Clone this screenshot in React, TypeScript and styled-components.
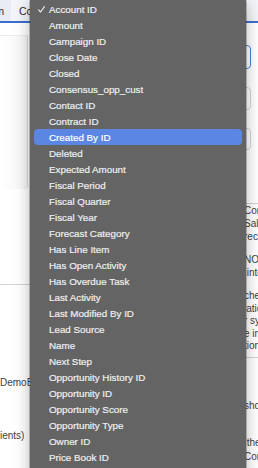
import styled, { createGlobalStyle } from "styled-components";

const GlobalStyle = createGlobalStyle`
  html, body {
    margin: 0;
    padding: 0;
    width: 258px;
    height: 468px;
    overflow: hidden;
    background: #ffffff;
  }
`;

const Page = styled.div`
  position: relative;
  width: 258px;
  height: 468px;
  overflow: hidden;
  background: #ffffff;
  font-family: "Liberation Sans", Arial, sans-serif;
  font-size: 10px;
  color: #3e3e3c;
`;

const TabBar = styled.div`
  display: flex;
  height: 21px;
  background: #f4f5f8;
  border-bottom: 2px solid #3b6fce;
`;

const Tab = styled.div<{ $active?: boolean }>`
  box-sizing: border-box;
  display: flex;
  align-items: center;
  justify-content: ${(p) => (p.$active ? "flex-end" : "flex-start")};
  width: ${(p) => (p.$active ? "11px" : "auto")};
  padding: ${(p) => (p.$active ? "0 7px 0 0" : "0 0 0 8px")};
  overflow: hidden;
  white-space: nowrap;
  background: ${(p) => (p.$active ? "#e9ecf4" : "transparent")};
  font-size: 10.5px;
  color: #2b2b2b;
`;

const Body = styled.div`
  display: grid;
  grid-template-columns: 30px 1fr;
  height: 445px;
`;

const LeftCol = styled.div`
  display: flex;
  flex-direction: column;
  overflow: hidden;
`;

const Card = styled.div`
  margin-top: 12px;
  width: 27px;
  height: 153px;
  border-top: 1px solid #ececec;
  border-right: 1px solid #dadada;
  border-bottom-right-radius: 4px;
  background: linear-gradient(to right, #ffffff, #f5f5f5);
`;

const Rule = styled.div<{ $gap: number }>`
  margin-top: ${(p) => p.$gap}px;
  height: 1px;
  background: #d2d2d2;
  flex-shrink: 0;
`;

const Line = styled.div<{ $gap?: number }>`
  margin-top: ${(p) => p.$gap ?? 0}px;
  line-height: 12px;
  white-space: nowrap;
`;

const RightCol = styled.div`
  display: flex;
  flex-direction: column;
  overflow: hidden;
`;

const Form = styled.div`
  display: flex;
  flex-direction: column;
  padding: 0 7px 0 110px;
`;

const Input = styled.div<{ $gap: number; $h: number; $focus?: boolean }>`
  margin-top: ${(p) => p.$gap}px;
  height: ${(p) => p.$h - 2}px;
  border: 1px solid ${(p) => (p.$focus ? "#4c7fd8" : "#d4d4d4")};
  border-radius: 4px;
  background: #fff;
`;

const TextBlock = styled.div<{ $gap: number; $lh: number }>`
  margin-top: ${(p) => p.$gap}px;
  padding-left: 214px;
  line-height: ${(p) => p.$lh}px;
  white-space: pre;
  font-size: 10px;
  color: #3e3e3c;
`;

const Menu = styled.div`
  position: absolute;
  top: -4px;
  left: 30px;
  width: 216px;
  bottom: -30px;
  box-sizing: border-box;
  padding: 5px 4px;
  background: #646464;
  border-radius: 6px;
  box-shadow: 0 0 0 0.5px rgba(0, 0, 0, 0.45), 0 6px 16px rgba(0, 0, 0, 0.3);
  font-family: "Liberation Sans", Arial, sans-serif;
`;

const Item = styled.div<{ $highlighted?: boolean }>`
  position: relative;
  display: flex;
  align-items: center;
  height: 16px;
  padding-left: 15px;
  border-radius: 4px;
  font-size: 9.8px;
  white-space: nowrap;
  color: ${(p) => (p.$highlighted ? "#ffffff" : "#efefef")};
  -webkit-text-stroke: 0.2px ${(p) => (p.$highlighted ? "#ffffff" : "#efefef")};
  background: ${(p) => (p.$highlighted ? "#5b86e4" : "transparent")};
`;

const Check = styled.svg`
  position: absolute;
  left: 4px;
  top: 5px;
  width: 7px;
  height: 7px;
`;

const fields = [
  "Account ID",
  "Amount",
  "Campaign ID",
  "Close Date",
  "Closed",
  "Consensus_opp_cust",
  "Contact ID",
  "Contract ID",
  "Created By ID",
  "Deleted",
  "Expected Amount",
  "Fiscal Period",
  "Fiscal Quarter",
  "Fiscal Year",
  "Forecast Category",
  "Has Line Item",
  "Has Open Activity",
  "Has Overdue Task",
  "Last Activity",
  "Last Modified By ID",
  "Lead Source",
  "Name",
  "Next Step",
  "Opportunity History ID",
  "Opportunity ID",
  "Opportunity Score",
  "Opportunity Type",
  "Owner ID",
  "Price Book ID",
  "Probability (%)",
];

export default function App() {
  const checked = "Account ID";
  const highlighted = "Created By ID";

  return (
    <Page>
      <GlobalStyle />
      <TabBar>
        <Tab $active>Description</Tab>
        <Tab>Contacts</Tab>
      </TabBar>
      <Body>
        <LeftCol>
          <Card />
          <Rule $gap={95} />
          <Line $gap={92}>DemoBox</Line>
          <Line $gap={41}>ients)</Line>
        </LeftCol>
        <RightCol>
          <Form>
            <Input $gap={22} $h={24} $focus />
            <Input $gap={18} $h={23} />
            <Input $gap={18} $h={22} />
          </Form>
          <Rule $gap={53} />
          <TextBlock $gap={0} $lh={13}>
            {"Corresponding\nSales Cloud\nrecords"}
          </TextBlock>
          <TextBlock $gap={10} $lh={13}>
            {"NOTE:\n integration"}
          </TextBlock>
          <TextBlock $gap={11} $lh={12.5}>
            {"checked\nlations\nr sync\ne in\ntions"}
          </TextBlock>
          <Rule $gap={4} />
          <TextBlock $gap={41} $lh={13}>
            {"should"}
          </TextBlock>
          <TextBlock $gap={24} $lh={14}>
            {" the\nContact"}
          </TextBlock>
        </RightCol>
      </Body>

      <Menu>
        {fields.map((f) => (
          <Item key={f} $highlighted={f === highlighted}>
            {f === checked && (
              <Check viewBox="0 0 7 7">
                <path
                  d="M0.6 3.9 L2.6 6 L6.4 0.6"
                  fill="none"
                  stroke="#f2f2f2"
                  strokeWidth="1.1"
                  strokeLinecap="round"
                  strokeLinejoin="round"
                />
              </Check>
            )}
            {f}
          </Item>
        ))}
      </Menu>
    </Page>
  );
}
